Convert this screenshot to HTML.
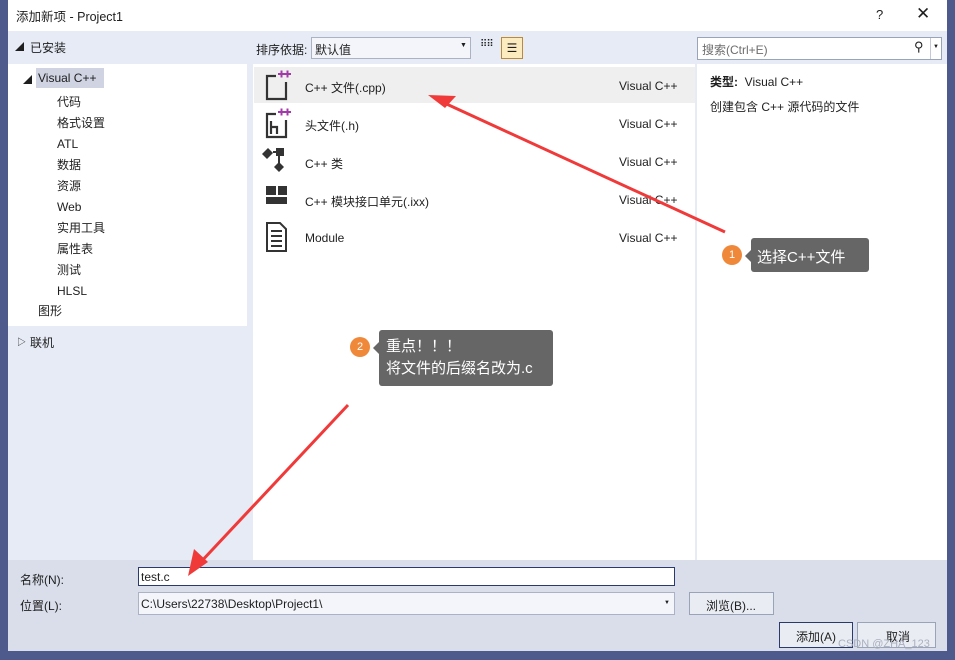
<!DOCTYPE html>
<html><head><meta charset="utf-8"><style>
*{margin:0;padding:0;box-sizing:border-box}
body{width:955px;height:660px;overflow:hidden;background:#4e5a8c;font-family:"Liberation Sans","Noto Sans CJK SC",sans-serif;font-size:12px;color:#1e1e1e;position:relative}
.a{position:absolute}
.dlg{left:8px;top:0;width:939px;height:651px;background:#e6ebf5}
.t{white-space:nowrap}
</style></head><body>
<div class="a dlg"></div>
<div class="a" style="left:8px;top:0;width:939px;height:31px;background:#fff"></div>
<div class="a t" style="left:16px;top:6px;font-size:12.5px">添加新项 - Project1</div>
<div class="a t" style="left:876px;top:7px;font-size:13px">?</div>
<div class="a t" style="left:916px;top:4px;font-size:17px">✕</div>

<div class="a t" style="left:15px;top:40px;font-size:9px">◢</div>
<div class="a t" style="left:30px;top:39px">已安装</div>
<div class="a t" style="left:256px;top:41px">排序依据:</div>
<div class="a" style="left:311px;top:37px;width:160px;height:22px;border:1px solid #aab2c4;background:#f3f5fb"></div>
<div class="a t" style="left:315px;top:41px">默认值</div>
<div class="a t" style="left:460px;top:42px;font-size:7px">▼</div>
<div class="a t" style="left:480px;top:39px;font-size:10px;letter-spacing:-1px">⠿⠿</div>
<div class="a" style="left:501px;top:37px;width:22px;height:22px;background:#fdebc0;border:1px solid #b88a3a;text-align:center;font-size:12px;line-height:20px">☰</div>
<div class="a" style="left:697px;top:37px;width:245px;height:23px;border:1px solid #9aa4b8;background:#fff"></div>
<div class="a t" style="left:702px;top:41px;color:#6d6d6d">搜索(Ctrl+E)</div>
<div class="a t" style="left:914px;top:39px;font-size:13px">⚲</div>
<div class="a" style="left:930px;top:38px;width:1px;height:21px;background:#c4c9d6"></div>
<div class="a t" style="left:933px;top:44px;font-size:6px">▼</div>

<div class="a" style="left:8px;top:64px;width:239px;height:262px;background:#fff"></div>
<div class="a" style="left:36px;top:68px;width:68px;height:20px;background:#cfd3e2"></div>
<div class="a t" style="left:23px;top:73px;font-size:9px">◢</div>
<div class="a t" style="left:38px;top:71px">Visual C++</div>
<div class="a t" style="left:57px;top:92px;line-height:21px">代码<br>格式设置<br>ATL<br>数据<br>资源<br>Web<br>实用工具<br>属性表<br>测试<br>HLSL</div>
<div class="a t" style="left:38px;top:302px">图形</div>
<div class="a t" style="left:17px;top:335px;font-size:9px">▷</div>
<div class="a t" style="left:30px;top:334px">联机</div>

<div class="a" style="left:253px;top:64px;width:442px;height:496px;background:#fff"></div>
<div class="a" style="left:254px;top:67px;width:441px;height:36px;background:#efefef"></div>
<div class="a" style="left:697px;top:64px;width:250px;height:496px;background:#fff"></div>

<svg class="a" style="left:260px;top:68px" width="36" height="190" viewBox="0 0 36 190">
<g fill="none" stroke="#333" stroke-width="2.2"><path d="M16 8H7v23h19V14"/><path d="M16 46H7v23h19V52"/></g>
<g fill="#a03ba8"><rect x="18" y="5" width="7" height="2"/><rect x="20.5" y="2.5" width="2" height="7"/><rect x="24" y="5" width="7" height="2"/><rect x="26.5" y="2.5" width="2" height="7"/>
<rect x="18" y="43" width="7" height="2"/><rect x="20.5" y="40.5" width="2" height="7"/><rect x="24" y="43" width="7" height="2"/><rect x="26.5" y="40.5" width="2" height="7"/></g>
<path d="M11 53v13M11 59h6v7" stroke="#333" stroke-width="2.2" fill="none"/>
<g fill="#333"><path d="M2 86l6-6 5 5-6 6z"/><path d="M13 84h6v18" stroke="#333" stroke-width="2" fill="none"/><path d="M14 99l5-5 5 5-5 5z"/><rect x="16" y="80" width="8" height="8"/></g>
<g fill="#333"><rect x="6" y="118" width="10" height="9"/><rect x="18" y="118" width="9" height="9"/><rect x="6" y="129" width="21" height="7"/></g>
<path d="M7 155h13l6 6v22H7z M11 163h11M11 168h11M11 173h11M11 178h11" stroke="#333" stroke-width="2" fill="none"/>
</svg>
<div class="a t" style="left:305px;top:79px">C++ 文件(.cpp)</div>
<div class="a t" style="left:305px;top:117px">头文件(.h)</div>
<div class="a t" style="left:305px;top:155px">C++ 类</div>
<div class="a t" style="left:305px;top:193px">C++ 模块接口单元(.ixx)</div>
<div class="a t" style="left:305px;top:231px">Module</div>
<div class="a t" style="left:619px;top:79px;line-height:38px;margin-top:-12px">Visual C++<br>Visual C++<br>Visual C++<br>Visual C++<br>Visual C++</div>
<div class="a t" style="left:710px;top:73px"><b>类型:</b> &nbsp;Visual C++</div>
<div class="a t" style="left:710px;top:98px">创建包含 C++ 源代码的文件</div>

<div class="a" style="left:8px;top:560px;width:939px;height:91px;background:#d9deea"></div>
<div class="a t" style="left:20px;top:571px">名称(N):</div>
<div class="a" style="left:138px;top:567px;width:537px;height:19px;border:1px solid #2a3a6a;background:#fff"></div>
<div class="a t" style="left:141px;top:570px">test.c</div>
<div class="a t" style="left:20px;top:597px">位置(L):</div>
<div class="a" style="left:138px;top:592px;width:537px;height:23px;border:1px solid #aab2c4;background:#f3f5fb"></div>
<div class="a t" style="left:141px;top:597px">C:\Users\22738\Desktop\Project1\</div>
<div class="a t" style="left:664px;top:600px;font-size:6px">▼</div>
<div class="a" style="left:689px;top:592px;width:85px;height:23px;border:1px solid #9aa4b8;background:#e9ecf3"></div>
<div class="a t" style="left:706px;top:597px">浏览(B)...</div>
<div class="a" style="left:779px;top:622px;width:74px;height:26px;border:1px solid #2a3a6a;background:#e9ecf3"></div>
<div class="a t" style="left:796px;top:628px">添加(A)</div>
<div class="a" style="left:857px;top:622px;width:79px;height:26px;border:1px solid #9aa4b8;background:#e9ecf3"></div>
<div class="a t" style="left:886px;top:628px">取消</div>
<div class="a t" style="left:838px;top:638px;font-size:11px;color:#aab0be">CSDN @ZHA_123</div>

<svg class="a" style="left:0;top:0" width="955" height="660">
<path d="M725 232L440 101" stroke="#f03a3a" stroke-width="3"/>
<polygon points="428,95 456,96 445,108" fill="#f03a3a"/>
<path d="M348 405L198 565" stroke="#f03a3a" stroke-width="3"/>
<polygon points="188,576 194,549 208,562" fill="#f03a3a"/>
</svg>

<div class="a" style="left:722px;top:245px;width:20px;height:20px;border-radius:50%;background:#f0883a;color:#fff;text-align:center;line-height:20px;font-size:11px">1</div>
<div class="a" style="left:751px;top:238px;width:118px;height:34px;background:#666;border-radius:3px"></div>
<div class="a" style="left:745px;top:250px;border:6px solid transparent;border-right-color:#666;border-left:0"></div>
<div class="a t" style="left:757px;top:246px;color:#fff;font-size:15px">选择C++文件</div>

<div class="a" style="left:350px;top:337px;width:20px;height:20px;border-radius:50%;background:#f0883a;color:#fff;text-align:center;line-height:20px;font-size:11px">2</div>
<div class="a" style="left:379px;top:330px;width:174px;height:56px;background:#666;border-radius:3px"></div>
<div class="a" style="left:373px;top:342px;border:6px solid transparent;border-right-color:#666;border-left:0"></div>
<div class="a t" style="left:386px;top:336px;color:#fff;font-size:15px;line-height:22px">重点！！！<br>将文件的后缀名改为.c</div>
</body></html>
